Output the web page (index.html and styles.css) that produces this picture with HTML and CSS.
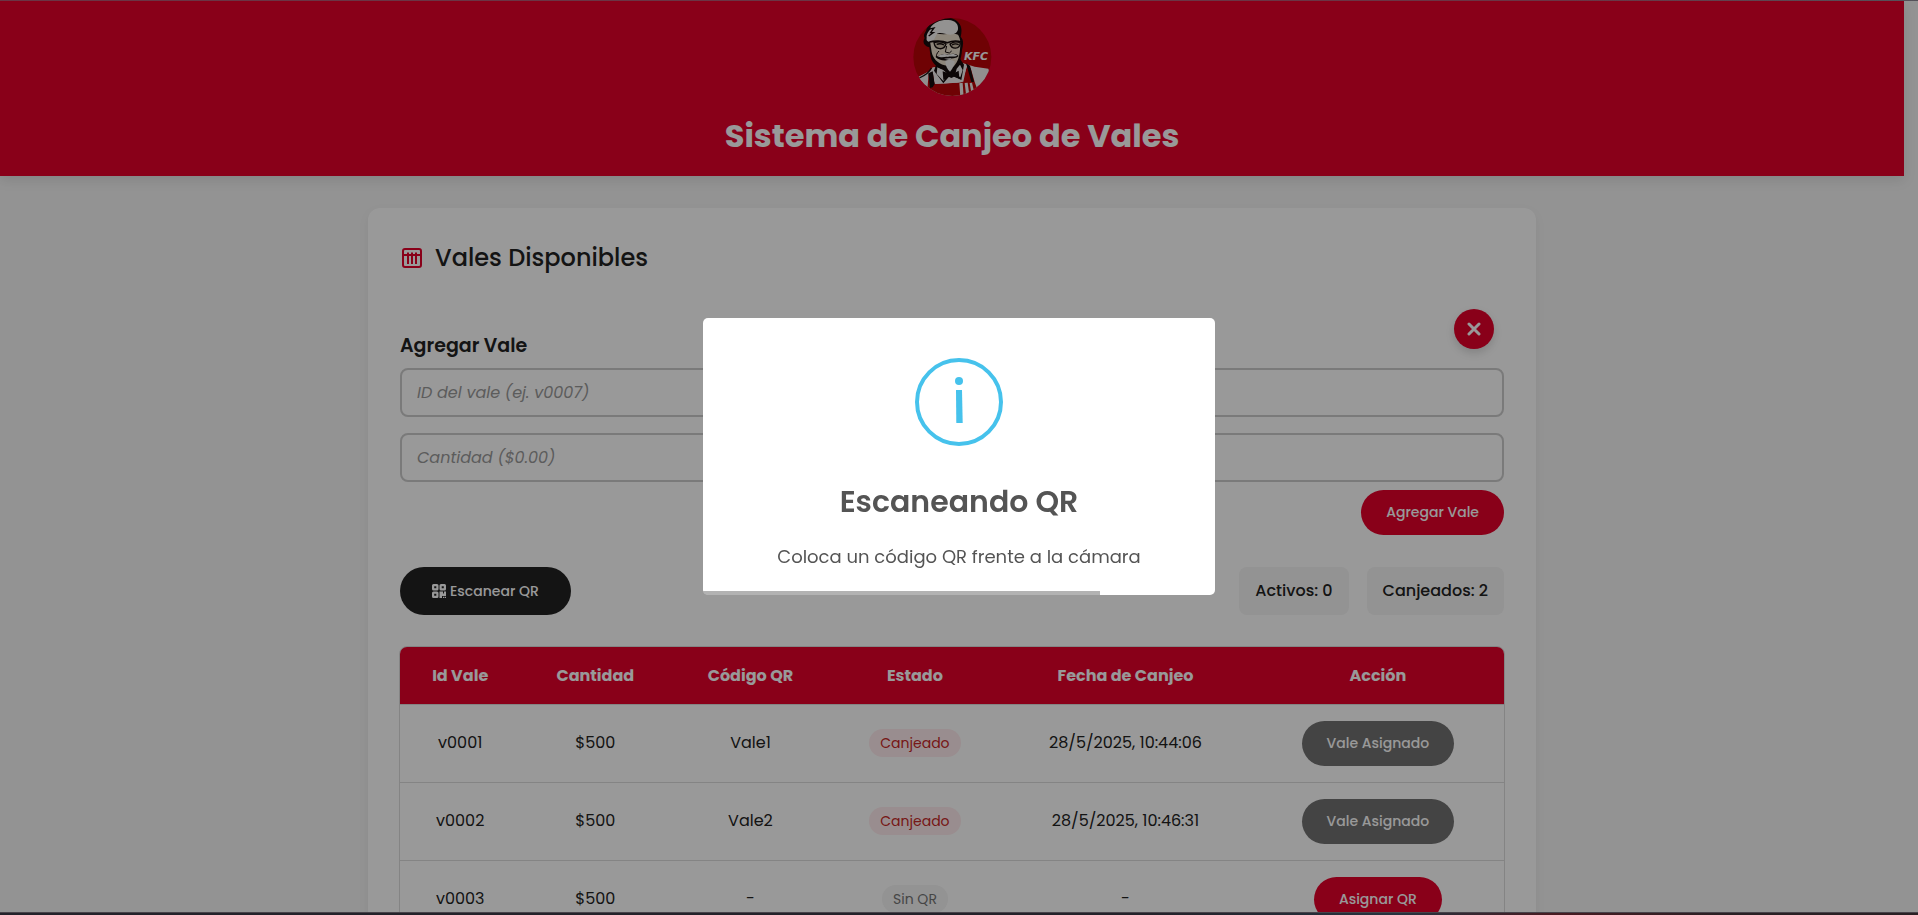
FILE: index.html
```html
<!DOCTYPE html>
<html lang="es">
<head>
<meta charset="utf-8">
<meta name="viewport" content="width=device-width, initial-scale=1">
<title>Sistema de Canjeo de Vales</title>
<link rel="stylesheet" href="styles.css">
</head>
<body>
<header class="site-header">
  <svg class="logo" viewBox="96 51 240 240" role="img" aria-label="KFC">
    <defs><clipPath id="disc"><circle cx="217" cy="171" r="117"/></clipPath></defs>
    <g clip-path="url(#disc)">
      <rect x="96" y="51" width="240" height="240" fill="#b90408"/>
      <path d="M104 236 L150 212 L180 200 L250 190 L284 200 L325 206 L336 240 L300 291 L140 291 Z" fill="#f2efee"/>
      <path d="M120 231 C140 222 152 214 158 202 L176 200 C172 214 170 232 168 258 L150 262 L122 247 Z" fill="#f2efee"/>
      <path d="M146 222 L158 217 L164 252 C190 250 226 250 246 246 L262 196 L272 204 L284 246 L300 291 L140 291 Z" fill="#b90408"/>
      <path d="M118 234 C136 226 148 218 154 204" fill="none" stroke="#150c0c" stroke-width="4"/>
      <path d="M145 220 L158 214 L164 252 L158 262 L150 264 Z M258 190 L270 197 L282 246 L274 246 Z" fill="#150c0c"/>
      <path d="M164 208 C160 224 162 240 166 252 C194 248 226 250 250 245 L260 198 L238 184 Z" fill="#f2efee"/>
      <path d="M170 190 L162 212 L190 250 L212 224 L244 240 L252 194 L240 176 Z" fill="#150c0c"/>
      <path d="M172 202 L170 222 L190 243 L203 222 L190 210 Z M240 194 L248 210 L241 232 L226 222 L230 206 Z" fill="#f2efee"/>
      <path d="M148 142 C132 138 126 126 134 114 C128 104 136 98 138 92 C142 74 160 60 184 54 C204 50 224 54 236 68 C246 78 246 96 242 110 C252 120 250 134 246 150 C244 178 236 200 222 212 L210 218 L190 208 C172 204 156 190 152 170 Z" fill="#150c0c"/>
      <path d="M150 124 C158 118 164 112 168 100 C190 106 220 98 234 104 C242 116 242 130 240 148 C238 176 230 192 218 202 L194 196 C172 190 158 174 155 156 Z" fill="#ebdfcd"/>
      <path d="M140 114 C138 98 152 92 152 82 C162 66 184 58 206 60 C226 62 236 72 234 88 C232 98 224 104 210 104 C196 102 184 96 172 100 C166 110 164 122 152 126 C144 126 138 122 140 114 Z" fill="#f6f3f2"/>
      <path d="M144 88 L162 84 L152 98 L160 98 L146 108" fill="none" stroke="#150c0c" stroke-width="4"/>
      <path d="M148 126 C162 122 188 122 202 128 C216 122 232 122 246 126" fill="none" stroke="#150c0c" stroke-width="5"/>
      <path d="M162 128 C176 124 190 126 198 132 C192 151 166 152 162 128 Z M210 132 C220 125 233 125 241 129 C239 149 215 149 210 132 Z" fill="#cfc0aa" stroke="#150c0c" stroke-width="4"/>
      <path d="M170 133 C178 130 186 131 192 135 M216 135 C222 131 230 131 236 134" fill="none" stroke="#150c0c" stroke-width="4"/>
      <path d="M200 138 L196 156 L208 159 L215 153 M177 153 C170 160 168 166 170 172" fill="none" stroke="#150c0c" stroke-width="3"/>
      <path d="M166 170 C180 168 190 158 206 164 C218 159 228 160 236 168 C228 176 220 174 214 176 L206 180 C190 184 176 180 166 170 Z" fill="#150c0c"/>
      <path d="M172 168 C184 164 192 159 204 164 C216 160 226 162 232 167 C218 173 210 167 204 171 C194 169 186 176 172 168 Z M192 176 L216 174 L208 180 Z" fill="#f6f3f2"/>
      <path d="M196 183 C204 178 216 180 224 184 C222 200 216 208 210 215 C202 208 196 198 196 183 Z" fill="#f6f3f2"/>
      <path d="M188 214 L206 220 L214 216 L222 220 L236 212 L238 236 L222 230 L214 234 L206 230 L190 240 Z" fill="#150c0c"/>
      <path d="M238 250 L248 248 L251 291 H241 Z M254 249 L263 248 L269 291 H259 Z M269 249 L276 248 L286 291 H276 Z" fill="#f2efee"/>
      <text class="logo-text" x="252" y="181">KFC</text>
    </g>
  </svg>
  <h1 class="site-title">Sistema de Canjeo de Vales</h1>
</header>

<main class="page">
  <section class="card">
    <h2 class="card-title">
      <svg class="title-icon" viewBox="0 0 20 20" aria-hidden="true">
        <rect x="1" y="1" width="18" height="18" rx="2"/>
        <path d="M2 7H18M6 4.500V16M10 4.500V16M14 4.500V16"/>
      </svg>
      Vales Disponibles
    </h2>

    <form class="add-form">
      <button class="close-btn" type="button" aria-label="Cerrar">
        <svg viewBox="0 0 14 14" aria-hidden="true"><path d="M2 2L12 12M12 2L2 12"/></svg>
      </button>
      <label class="form-label" for="vale-id">Agregar Vale</label>
      <input class="field" id="vale-id" type="text" placeholder="ID del vale (ej. v0007)">
      <input class="field" id="vale-amount" type="text" placeholder="Cantidad ($0.00)" aria-label="Cantidad">
      <button class="btn btn-red form-submit" type="button">Agregar Vale</button>
    </form>

    <div class="toolbar">
      <button class="btn btn-dark" type="button">
        <svg class="qr-icon" viewBox="0 0 14 14" aria-hidden="true">
          <path fill-rule="evenodd" d="M1.500 0H5Q6.500 0 6.500 1.500V5Q6.500 6.500 5 6.500H1.500Q0 6.500 0 5V1.500Q0 0 1.500 0ZM2.200 2.200V4.300H4.300V2.200ZM9 0H12.500Q14 0 14 1.500V5Q14 6.500 12.500 6.500H9Q7.500 6.500 7.500 5V1.500Q7.500 0 9 0ZM9.700 2.200V4.300H11.800V2.200ZM1.500 7.500H5Q6.500 7.500 6.500 9V12.500Q6.500 14 5 14H1.500Q0 14 0 12.500V9Q0 7.500 1.500 7.500ZM2.200 9.700V11.800H4.300V9.700ZM7.500 7.500H11V9.500H12V7.500H14V12H10V14H7.500ZM11 12.800H12.200V14H11ZM12.800 12.800H14V14H12.800Z"/>
        </svg>
        Escanear QR
      </button>
      <div class="stats">
        <span class="stat">Activos: 0</span>
        <span class="stat">Canjeados: 2</span>
      </div>
    </div>

    <div class="table-wrap">
      <table class="vales">
        <thead>
          <tr><th>Id Vale</th><th>Cantidad</th><th>Código QR</th><th>Estado</th><th>Fecha de Canjeo</th><th>Acción</th></tr>
        </thead>
        <tbody>
          <tr>
            <td>v0001</td><td>$500</td><td>Vale1</td>
            <td><span class="badge badge-used">Canjeado</span></td>
            <td>28/5/2025, 10:44:06</td>
            <td><button class="btn btn-grey" type="button">Vale Asignado</button></td>
          </tr>
          <tr>
            <td>v0002</td><td>$500</td><td>Vale2</td>
            <td><span class="badge badge-used">Canjeado</span></td>
            <td>28/5/2025, 10:46:31</td>
            <td><button class="btn btn-grey" type="button">Vale Asignado</button></td>
          </tr>
          <tr>
            <td>v0003</td><td>$500</td><td>-</td>
            <td><span class="badge badge-none">Sin QR</span></td>
            <td>-</td>
            <td><button class="btn btn-red" type="button">Asignar QR</button></td>
          </tr>
        </tbody>
      </table>
    </div>
  </section>
</main>

<div class="overlay"></div>
<div class="modal-layer">
  <div class="modal" role="dialog" aria-modal="true" aria-labelledby="modal-title">
    <svg class="modal-icon" viewBox="0 0 88 88" aria-hidden="true">
      <circle class="ring" cx="44" cy="44" r="42"/>
      <circle class="fill" cx="44" cy="23" r="4"/>
      <path class="fill" d="M41 32H47L47.700 65H41.300Z"/>
    </svg>
    <h2 class="modal-title" id="modal-title">Escaneando QR</h2>
    <p class="modal-text">Coloca un código QR frente a la cámara</p>
    <div class="timer"><div class="timer-bar" style="width: 77.500%"></div></div>
  </div>
</div>
<div class="edge edge-top"></div>
<div class="edge edge-bottom"></div>
</body>
</html>
```

FILE: styles.css
```css
* { box-sizing: border-box; }

html { overflow: hidden; }

body {
  height: 100vh;
  overflow: hidden;
  margin: 0;
  padding: 1px 14px 0 0;
  background: #f5f5f5;
  color: #222;
  font-family: Poppins, Inter, "Open Sans", sans-serif;
  font-size: 16px;
  line-height: 24px;
}

button, input { font-family: inherit; }

/* Header */
.site-header {
  display: flex;
  flex-direction: column;
  align-items: center;
  gap: 14px;
  padding: 16px;
  background: #e4002b;
  box-shadow: 0 4px 12px rgba(0, 0, 0, 0.1);
}
.logo { display: block; width: 80px; height: 80px; }
.logo-text {
  font-family: "DejaVu Sans", sans-serif;
  font-size: 33px;
  font-style: italic;
  font-weight: 700;
  fill: #fff;
}
.site-title {
  margin: 0;
  color: #fff;
  font-size: 32px;
  font-weight: 700;
  line-height: 49px;
}

/* Card */
.page { max-width: 1200px; margin: 0 auto; padding: 32px 16px; }
.card {
  padding: 32px;
  border-radius: 12px;
  background: #fff;
  box-shadow: 0 4px 12px rgba(0, 0, 0, 0.05);
}
.card-title {
  display: flex;
  align-items: center;
  gap: 13px;
  margin: 0;
  padding-left: 2px;
  font-size: 24px;
  font-weight: 500;
  line-height: 36px;
}
.title-icon { width: 20px; height: 20px; fill: none; stroke: #e4002b; stroke-width: 2; }

/* Form */
.add-form {
  position: relative;
  display: flex;
  flex-direction: column;
  margin-top: 54px;
}
.form-label { margin-bottom: 6px; font-size: 19px; font-weight: 600; line-height: 32px; }
.field {
  width: 100%;
  height: 49px;
  margin-bottom: 16px;
  padding: 0 15px;
  border: 2px solid #ccc;
  border-radius: 8px;
  background: #fff;
  color: #222;
  font-size: 16px;
}
.field + .btn { margin-top: -8px; }
.field::placeholder { color: #999; font-style: italic; opacity: 1; }
.form-submit { align-self: flex-end; }
.close-btn {
  position: absolute;
  top: -21px;
  right: 10px;
  display: grid;
  place-items: center;
  width: 40px;
  height: 40px;
  padding: 0;
  border: 0;
  border-radius: 50%;
  background: #e4002b;
  box-shadow: 0 4px 8px rgba(0, 0, 0, 0.15);
}
.close-btn svg {
  width: 14px;
  height: 14px;
  fill: none;
  stroke: #fff;
  stroke-width: 3;
  stroke-linecap: round;
}

/* Buttons */
.btn {
  display: inline-flex;
  align-items: center;
  justify-content: center;
  gap: 4px;
  padding: 12px 25px;
  border: 0;
  border-radius: 24px;
  color: #fff;
  font-size: 14px;
  font-weight: 500;
  line-height: 21px;
  white-space: nowrap;
}
.btn-red { background: #e4002b; }
.btn-grey { background: #727272; }
.btn-dark { padding: 13px 32px; background: #222; line-height: 22px; }
.qr-icon { width: 14px; height: 14px; fill: #fff; }

/* Toolbar */
.toolbar {
  display: flex;
  align-items: center;
  justify-content: space-between;
  margin: 32px 0 31px;
}
.stats { display: flex; gap: 18px; }
.stat {
  padding: 12px 16px;
  border-radius: 8px;
  background: #f5f5f5;
  font-weight: 500;
}

/* Table */
.table-wrap { overflow: hidden; margin: 0 -1px; border: 1px solid #ddd; border-radius: 8px; }
.vales { width: 100%; border-collapse: collapse; text-align: center; }
.vales th {
  height: 57px;
  padding: 1px 16px 0;
  background: #e4002b;
  color: #fff;
  font-weight: 700;
}
.vales td { height: 78px; padding: 0 16px; border-top: 1px solid #ddd; }
.badge {
  display: inline-block;
  padding: 3px 11px;
  border-radius: 14px;
  font-size: 14px;
  line-height: 22px;
}
.badge-used { background: #ffebee; color: #c62828; }
.badge-none { background: #f5f5f5; color: #757575; }

/* Modal */
.overlay { position: fixed; inset: 0; background: rgba(0, 0, 0, 0.4); }
.modal-layer {
  position: fixed;
  inset: 0 0 3px;
  display: grid;
  place-items: center;
  padding: 10px;
}
.modal {
  display: flex;
  flex-direction: column;
  align-items: center;
  overflow: hidden;
  width: 100%;
  max-width: 512px;
  padding-top: 40px;
  border-radius: 5px;
  background: #fff;
  color: #545454;
  text-align: center;
}
.modal-icon { width: 88px; height: 88px; }
.modal-icon .ring { fill: none; stroke: #46c2ec; stroke-width: 4; }
.modal-icon .fill { fill: #46c2ec; }
.modal-title { margin: 32px 0 0; font-size: 30px; font-weight: 600; line-height: 48px; }
.modal-text { margin: 15px 0 19px; font-size: 18px; line-height: 31px; }
.timer { width: 100%; height: 4px; }
.timer-bar { height: 100%; background: rgba(0, 0, 0, 0.3); }

/* Thin window borders */
.edge { position: fixed; left: 0; right: 0; }
.edge-top { top: 0; height: 1px; background: linear-gradient(90deg, #6b3545 82%, #55525a); }
.edge-bottom {
  bottom: 0;
  height: 3px;
  border-top: 1px solid #48434a;
  background: linear-gradient(90deg, #24222a 60%, #26323e 73%, #4a1b22 81%, #2a2024 90%);
}
```
